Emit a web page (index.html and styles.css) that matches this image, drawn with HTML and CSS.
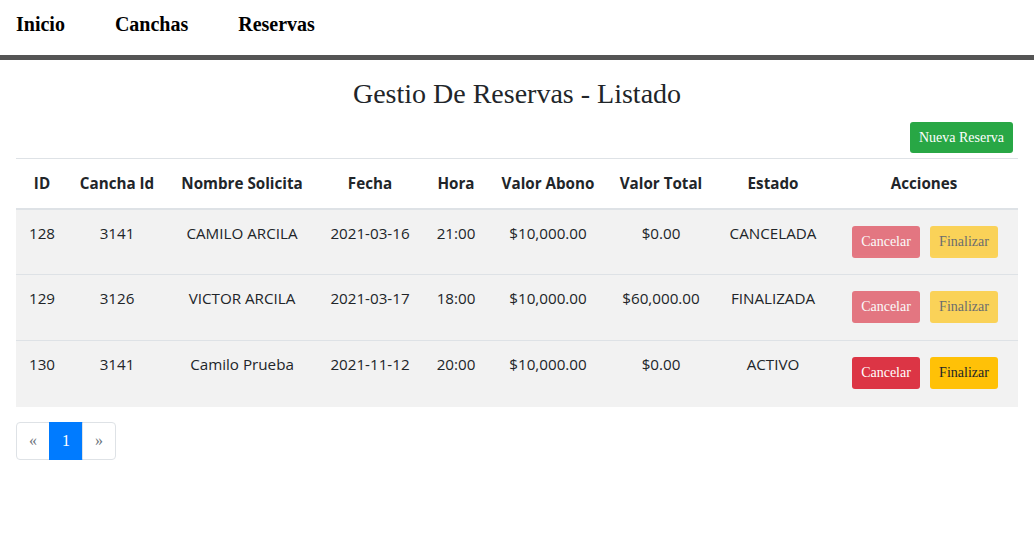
FILE: index.html
```html
<!DOCTYPE html>
<html lang="es">
<head>
<meta charset="utf-8">
<title>Gestio De Reservas</title>
<link rel="stylesheet" href="styles.css">
</head>
<body>
<nav class="topnav">
  <a href="#" class="navlink">Inicio</a>
  <a href="#" class="navlink">Canchas</a>
  <a href="#" class="navlink">Reservas</a>
</nav>
<main class="content">
  <h1 class="title">Gestio De Reservas - Listado</h1>
  <div class="toolbar"><button class="btn btn-green">Nueva Reserva</button></div>
  <table class="grid">
    <colgroup>
      <col class="c1"><col class="c2"><col class="c3"><col class="c4"><col class="c5"><col class="c6"><col class="c7"><col class="c8"><col class="c9">
    </colgroup>
    <thead>
      <tr><th>ID</th><th>Cancha Id</th><th>Nombre Solicita</th><th>Fecha</th><th>Hora</th><th>Valor Abono</th><th>Valor Total</th><th>Estado</th><th>Acciones</th></tr>
    </thead>
    <tbody>
      <tr><td>128</td><td>3141</td><td>CAMILO ARCILA</td><td>2021-03-16</td><td>21:00</td><td>$10,000.00</td><td>$0.00</td><td>CANCELADA</td>
        <td><div class="actions"><button class="btn btn-red off">Cancelar</button><button class="btn btn-yellow off">Finalizar</button></div></td></tr>
      <tr><td>129</td><td>3126</td><td>VICTOR ARCILA</td><td>2021-03-17</td><td>18:00</td><td>$10,000.00</td><td>$60,000.00</td><td>FINALIZADA</td>
        <td><div class="actions"><button class="btn btn-red off">Cancelar</button><button class="btn btn-yellow off">Finalizar</button></div></td></tr>
      <tr><td>130</td><td>3141</td><td>Camilo Prueba</td><td>2021-11-12</td><td>20:00</td><td>$10,000.00</td><td>$0.00</td><td>ACTIVO</td>
        <td><div class="actions"><button class="btn btn-red">Cancelar</button><button class="btn btn-yellow">Finalizar</button></div></td></tr>
    </tbody>
  </table>
  <ul class="pager">
    <li class="page">&laquo;</li>
    <li class="page active">1</li>
    <li class="page">&raquo;</li>
  </ul>
</main>
</body>
</html>
```
FILE: styles.css
```css
* { box-sizing: border-box; }
body { margin: 0; font-family: "Liberation Serif", "Times New Roman", serif; color: #212529; background: #fff; }
.topnav { display: flex; gap: 50px; padding: 0 16px; height: 55px; align-items: center; border-bottom: 5px solid #555; box-sizing: content-box; }
.navlink { font-weight: bold; font-size: 20px; color: #000; text-decoration: none; margin-top: -6px; }
.content { padding: 0 16px; }
.title { font-weight: normal; font-size: 28px; text-align: center; margin: 17px 0 11px; line-height: 34px; color: #212529; }
.toolbar { display: flex; justify-content: flex-end; padding-right: 5px; margin-bottom: 5px; }
.btn { font-family: "Liberation Serif", "Times New Roman", serif; font-size: 14px; border: none; border-radius: 3px; color: #fff; height: 31px; padding: 0 6px; cursor: pointer; }
.btn-green { background: #28a745; width: 103px; }
.btn-red { background: #dc3545; width: 68px; }
.btn-yellow { background: #ffc107; color: #212529; width: 68px; }
.off { opacity: .65; }
.grid { width: 100%; border-collapse: collapse; table-layout: fixed; font-family: "Open Sans", "Noto Sans", sans-serif; font-size: 15.2px; }
.c1 { width: 52px; } .c2 { width: 98px; } .c3 { width: 152px; } .c4 { width: 104px; } .c5 { width: 68px; }
.c6 { width: 116px; } .c7 { width: 110px; } .c8 { width: 114px; } .c9 { width: 188px; }
.grid th { font-weight: bold; height: 50px; border-top: 1px solid #dee2e6; border-bottom: 2px solid #dee2e6; text-align: center; vertical-align: middle; padding: 0 4px 1px; }
.grid td { background: #f2f2f2; height: 66px; text-align: center; vertical-align: top; padding: 13px 4px 0; border-top: 1px solid #dee2e6; }
.actions { display: flex; justify-content: center; gap: 10px; margin-top: 3px; padding-left: 2px; }
.actions .btn { height: 32px; }
.pager { list-style: none; display: flex; padding: 0; margin: 15px 0 0; }
.page { width: 34px; height: 38px; display: flex; align-items: center; justify-content: center; border: 1px solid #dee2e6; color: #007bff; font-size: 16px; margin-left: -1px; }
.page:first-child { margin-left: 0; border-radius: 4px 0 0 4px; color: #6c757d; }
.page:last-child { border-radius: 0 4px 4px 0; color: #6c757d; }
.page.active { background: #007bff; border-color: #007bff; color: #fff; }
```
